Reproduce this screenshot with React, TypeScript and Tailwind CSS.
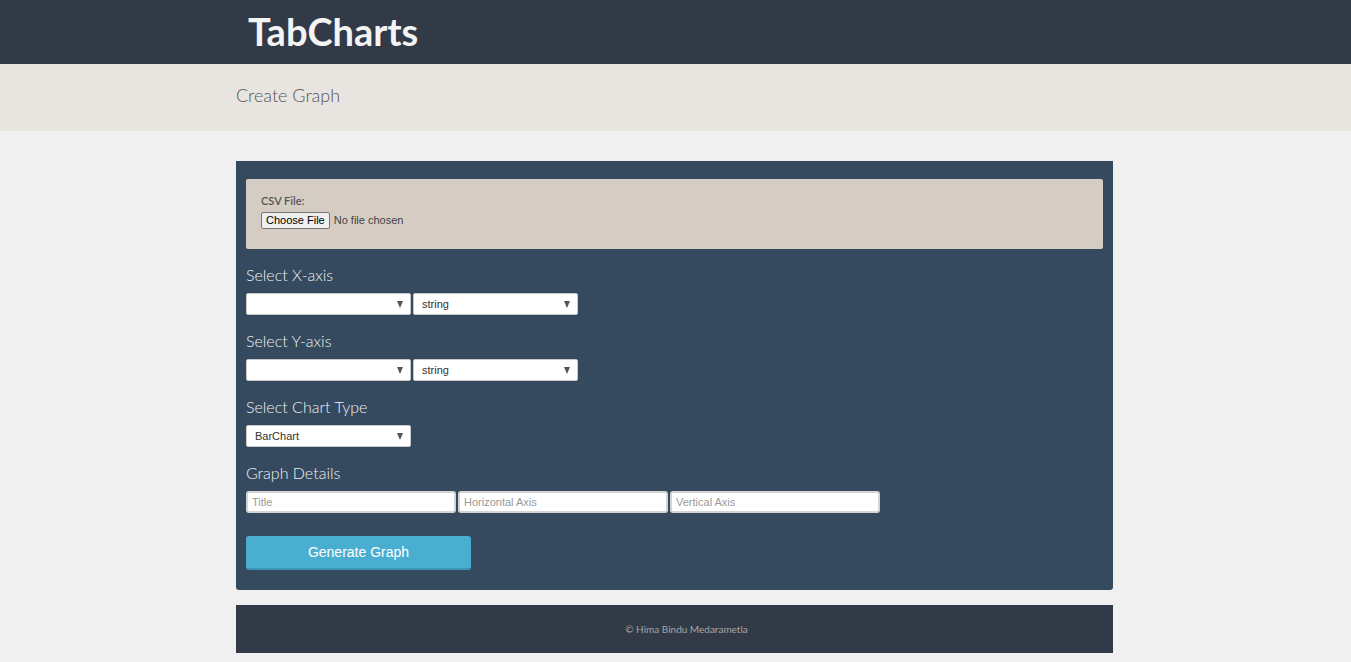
import React from 'react';

const lato = "font-['Lato','Noto_Sans',sans-serif]";
const arial = "font-['Liberation_Sans',Arial,sans-serif]";

function Select({ value, width = 'w-[165px]' }: { value: string; width?: string }) {
  return (
    <div className={`relative ${width} h-[22px]`}>
      <select
        defaultValue={value}
        className={`${arial} block appearance-none w-full h-full bg-white rounded-[2px] border border-[#c8c8c8] text-[11px] text-[#333] pl-[8px] outline-none`}
      >
        <option value={value}>{value}</option>
      </select>
      {/* dropdown arrow */}
      <span className="pointer-events-none absolute right-[8px] top-[8px] w-0 h-0 border-l-[3.5px] border-r-[3.5px] border-t-[7px] border-l-transparent border-r-transparent border-t-[#555]" />
    </div>
  );
}

function TextInput({ placeholder }: { placeholder: string }) {
  return (
    <input
      placeholder={placeholder}
      className={`${arial} block w-[210px] h-[22px] bg-white rounded-[3px] border-2 border-[#d4d4d4] text-[11px] text-[#333] placeholder:text-[#999] px-[4px] outline-none`}
    />
  );
}

function Group({ label, children }: { label: string; children: React.ReactNode }) {
  return (
    <div className="mt-[17px]">
      <div className={`${lato} text-[16px] font-light leading-[20px] text-[#f0f0f0] mb-[7px] -translate-y-[1px]`}>{label}</div>
      <div className="flex gap-[2px]">{children}</div>
    </div>
  );
}

export default function App() {
  return (
    <div className={`min-h-[662px] bg-[#f0f0f0] ${lato}`}>
      <header className="bg-[#333a47] h-[64px] pr-[2px]">
        <div className="w-[877px] mx-auto pl-[12px] h-full flex items-center">
          <h1 className="text-[38px] font-bold text-[#f4f4f4] leading-none pb-[2px]">TabCharts</h1>
        </div>
      </header>

      <div className="bg-[#e8e5e0] h-[67px] pr-[2px]">
        <div className="w-[877px] mx-auto h-full flex items-center">
          <h2 className="text-[18px] font-light text-[#555] leading-none pb-[6px]">Create Graph</h2>
        </div>
      </div>

      <div className="pr-[2px]">
        <main className="w-[877px] mx-auto pt-[30px]">
          <section className="bg-[#354a5f] rounded-b-[3px] px-[10px] pt-[18px] pb-[20px]">
            <div className="bg-[#d5cdc4] rounded-[2px] h-[70px] px-[15px] pt-[15px]">
              <div className="text-[11px] font-semibold text-[#555] leading-[14px]">CSV File:</div>
              <div className={`${arial} flex items-center mt-[4px] text-[11px] text-[#444]`}>
                <button className="h-[17px] px-[4px] bg-[#efefef] border border-[#767676] rounded-[2px] text-[11px] text-black leading-none">
                  Choose File
                </button>
                <span className="ml-[4px]">No file chosen</span>
              </div>
            </div>

            <Group label="Select X-axis">
              <Select value="" />
              <Select value="string" />
            </Group>

            <Group label="Select Y-axis">
              <Select value="" />
              <Select value="string" />
            </Group>

            <Group label="Select Chart Type">
              <Select value="BarChart" />
            </Group>

            <Group label="Graph Details">
              <TextInput placeholder="Title" />
              <TextInput placeholder="Horizontal Axis" />
              <TextInput placeholder="Vertical Axis" />
            </Group>

            <button
              className={`${arial} block mt-[23px] w-[225px] h-[34px] bg-[#4aaed0] border-b-2 border-[#3b95b6] rounded-[3px] text-white text-[14px]`}
            >
              Generate Graph
            </button>
          </section>

          <footer className="bg-[#333a47] h-[48px] mt-[15px] flex items-center justify-center">
            <span className="text-[10px] text-[#a6a6a6] pl-[24px]">© Hima Bindu Medarametla</span>
          </footer>
        </main>
      </div>
    </div>
  );
}
